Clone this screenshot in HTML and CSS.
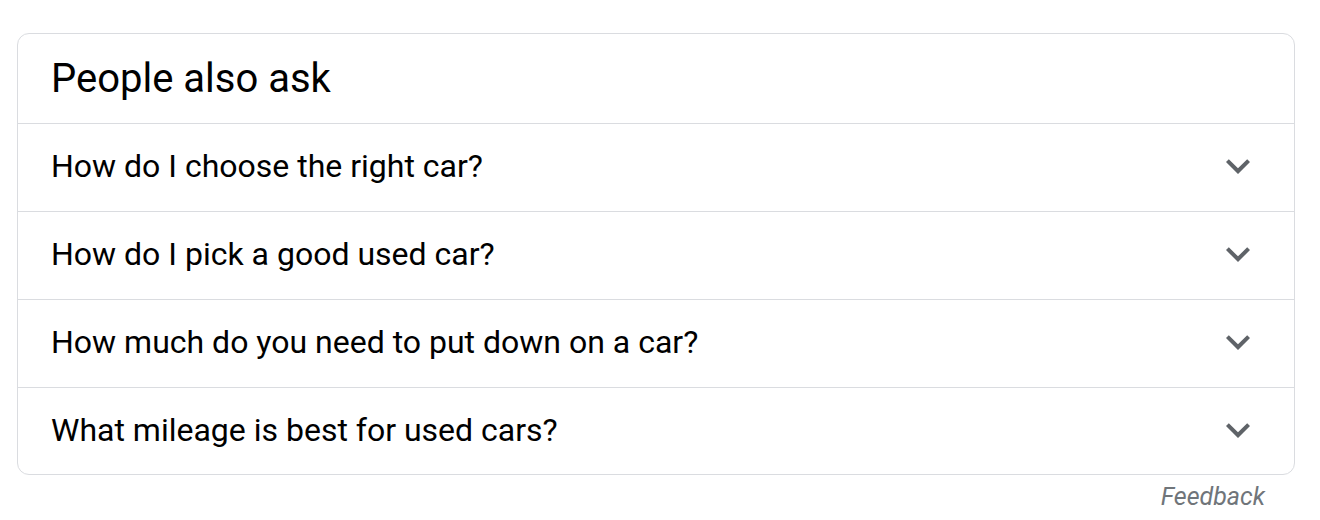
FILE: index.html
```html
<!DOCTYPE html>
<html>
<head>
<meta charset="utf-8">
<link rel="stylesheet" href="styles.css">
</head>
<body>
<div class="wrap">
  <div class="card">
    <div class="head">People also ask</div>
    <div class="row"><span class="q">How do I choose the right car?</span><svg class="chev" viewBox="0 0 24 24"><path d="M16.59 8.59L12 13.17 7.41 8.59 6 10l6 6 6-6z"/></svg></div>
    <div class="row"><span class="q">How do I pick a good used car?</span><svg class="chev" viewBox="0 0 24 24"><path d="M16.59 8.59L12 13.17 7.41 8.59 6 10l6 6 6-6z"/></svg></div>
    <div class="row"><span class="q">How much do you need to put down on a car?</span><svg class="chev" viewBox="0 0 24 24"><path d="M16.59 8.59L12 13.17 7.41 8.59 6 10l6 6 6-6z"/></svg></div>
    <div class="row"><span class="q">What mileage is best for used cars?</span><svg class="chev" viewBox="0 0 24 24"><path d="M16.59 8.59L12 13.17 7.41 8.59 6 10l6 6 6-6z"/></svg></div>
  </div>
  <div class="foot"><span class="feedback">Feedback</span></div>
</div>
</body>
</html>
```
FILE: styles.css
```css
html, body { margin: 0; padding: 0; background: #fff; }
body { font-family: Roboto, "Noto Sans", Arial, sans-serif; color: #000; }
.wrap { padding: 33px 25px 0 17px; }
.card {
  border: 1px solid #dadce0;
  border-radius: 12px;
  overflow: hidden;
}
.head {
  height: 89px;
  box-sizing: border-box;
  padding-left: 33px;
  display: flex;
  align-items: center;
  font-size: 40px;
  line-height: 1;
}
.row {
  height: 88px;
  box-sizing: border-box;
  border-top: 1px solid #dadce0;
  display: flex;
  align-items: center;
  padding: 0 32px 3px 33px;
  justify-content: space-between;
}
.row:last-child { height: 87px; }
.q { font-size: 32px; line-height: 1; }
.chev { width: 48px; height: 48px; fill: #5f6368; flex: none; }
.foot { display: flex; justify-content: flex-end; padding: 7px 30px 0 0; }
.feedback { font-style: italic; font-size: 25px; color: #70757a; }
```
